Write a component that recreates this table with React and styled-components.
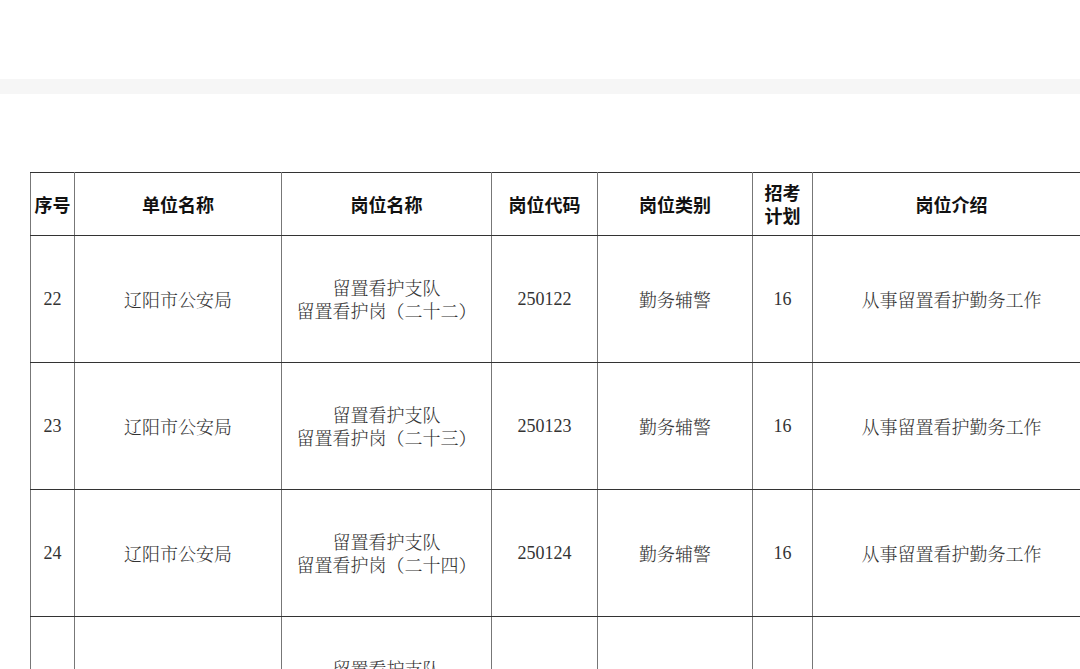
import React from 'react';
import styled, { createGlobalStyle } from 'styled-components';

const GlobalStyle = createGlobalStyle`
  html, body {
    margin: 0;
    padding: 0;
    background: #fff;
    overflow: hidden;
  }
  body {
    font-family: "Liberation Serif", "Noto Serif CJK SC", "Noto Sans CJK SC", serif;
  }
`;

const Page = styled.div`
  width: 1080px;
  height: 669px;
  overflow: hidden;
`;

const TopBar = styled.div`
  height: 79px;
  background: #fff;
`;

const Band = styled.div`
  height: 15px;
  background: #f6f6f6;
`;

const Sheet = styled.div`
  padding: 78px 0 0 30px;
`;

const Table = styled.table`
  border-collapse: collapse;
  table-layout: fixed;
  width: 1060px;
`;

const Head = styled.th`
  height: 62px;
  border-top: 1.5px solid #333;
  border-bottom: 1.5px solid #333;
  border-left: 1.5px solid #777;
  border-right: 1.5px solid #777;
  font-family: "Noto Sans CJK SC", sans-serif;
  font-weight: 700;
  font-size: 18px;
  line-height: 23px;
  color: #111;
  text-align: center;
  vertical-align: middle;
  word-break: break-all;
  padding: 0 ${(p) => (p.$tight ? '11px' : '0')};
`;

const Cell = styled.td`
  height: 126px;
  padding: 0;
  border-top: 1.5px solid #333;
  border-bottom: 1.5px solid #333;
  border-left: 1.5px solid #777;
  border-right: 1.5px solid #777;
  font-family: ${(p) =>
    p.$num
      ? '"Liberation Serif", serif'
      : '"Noto Serif CJK SC", "Noto Sans CJK SC", serif'};
  font-weight: ${(p) => (p.$num ? 400 : 300)};
  font-size: 18px;
  line-height: 23px;
  color: #333;
  text-align: center;
  vertical-align: middle;
`;

const Line = styled.div`
  white-space: nowrap;
`;

const columns = [44, 207, 210, 106, 155, 60, 278];

const rows = [
  { no: 22, code: '250122', suffix: '二十二' },
  { no: 23, code: '250123', suffix: '二十三' },
  { no: 24, code: '250124', suffix: '二十四' },
  { no: 25, code: '250125', suffix: '二十五' },
];

export default function App() {
  return (
    <Page>
      <GlobalStyle />
      <TopBar />
      <Band />
      <Sheet>
        <Table>
          <colgroup>
            {columns.map((w, i) => (
              <col key={i} style={{ width: w }} />
            ))}
          </colgroup>
          <thead>
            <tr>
              <Head>序号</Head>
              <Head>单位名称</Head>
              <Head>岗位名称</Head>
              <Head>岗位代码</Head>
              <Head>岗位类别</Head>
              <Head $tight>招考计划</Head>
              <Head>岗位介绍</Head>
            </tr>
          </thead>
          <tbody>
            {rows.map((r) => (
              <tr key={r.no}>
                <Cell $num>{r.no}</Cell>
                <Cell>辽阳市公安局</Cell>
                <Cell>
                  <Line>留置看护支队</Line>
                  <Line>留置看护岗（{r.suffix}）</Line>
                </Cell>
                <Cell $num>{r.code}</Cell>
                <Cell>勤务辅警</Cell>
                <Cell $num>16</Cell>
                <Cell>从事留置看护勤务工作</Cell>
              </tr>
            ))}
          </tbody>
        </Table>
      </Sheet>
    </Page>
  );
}
